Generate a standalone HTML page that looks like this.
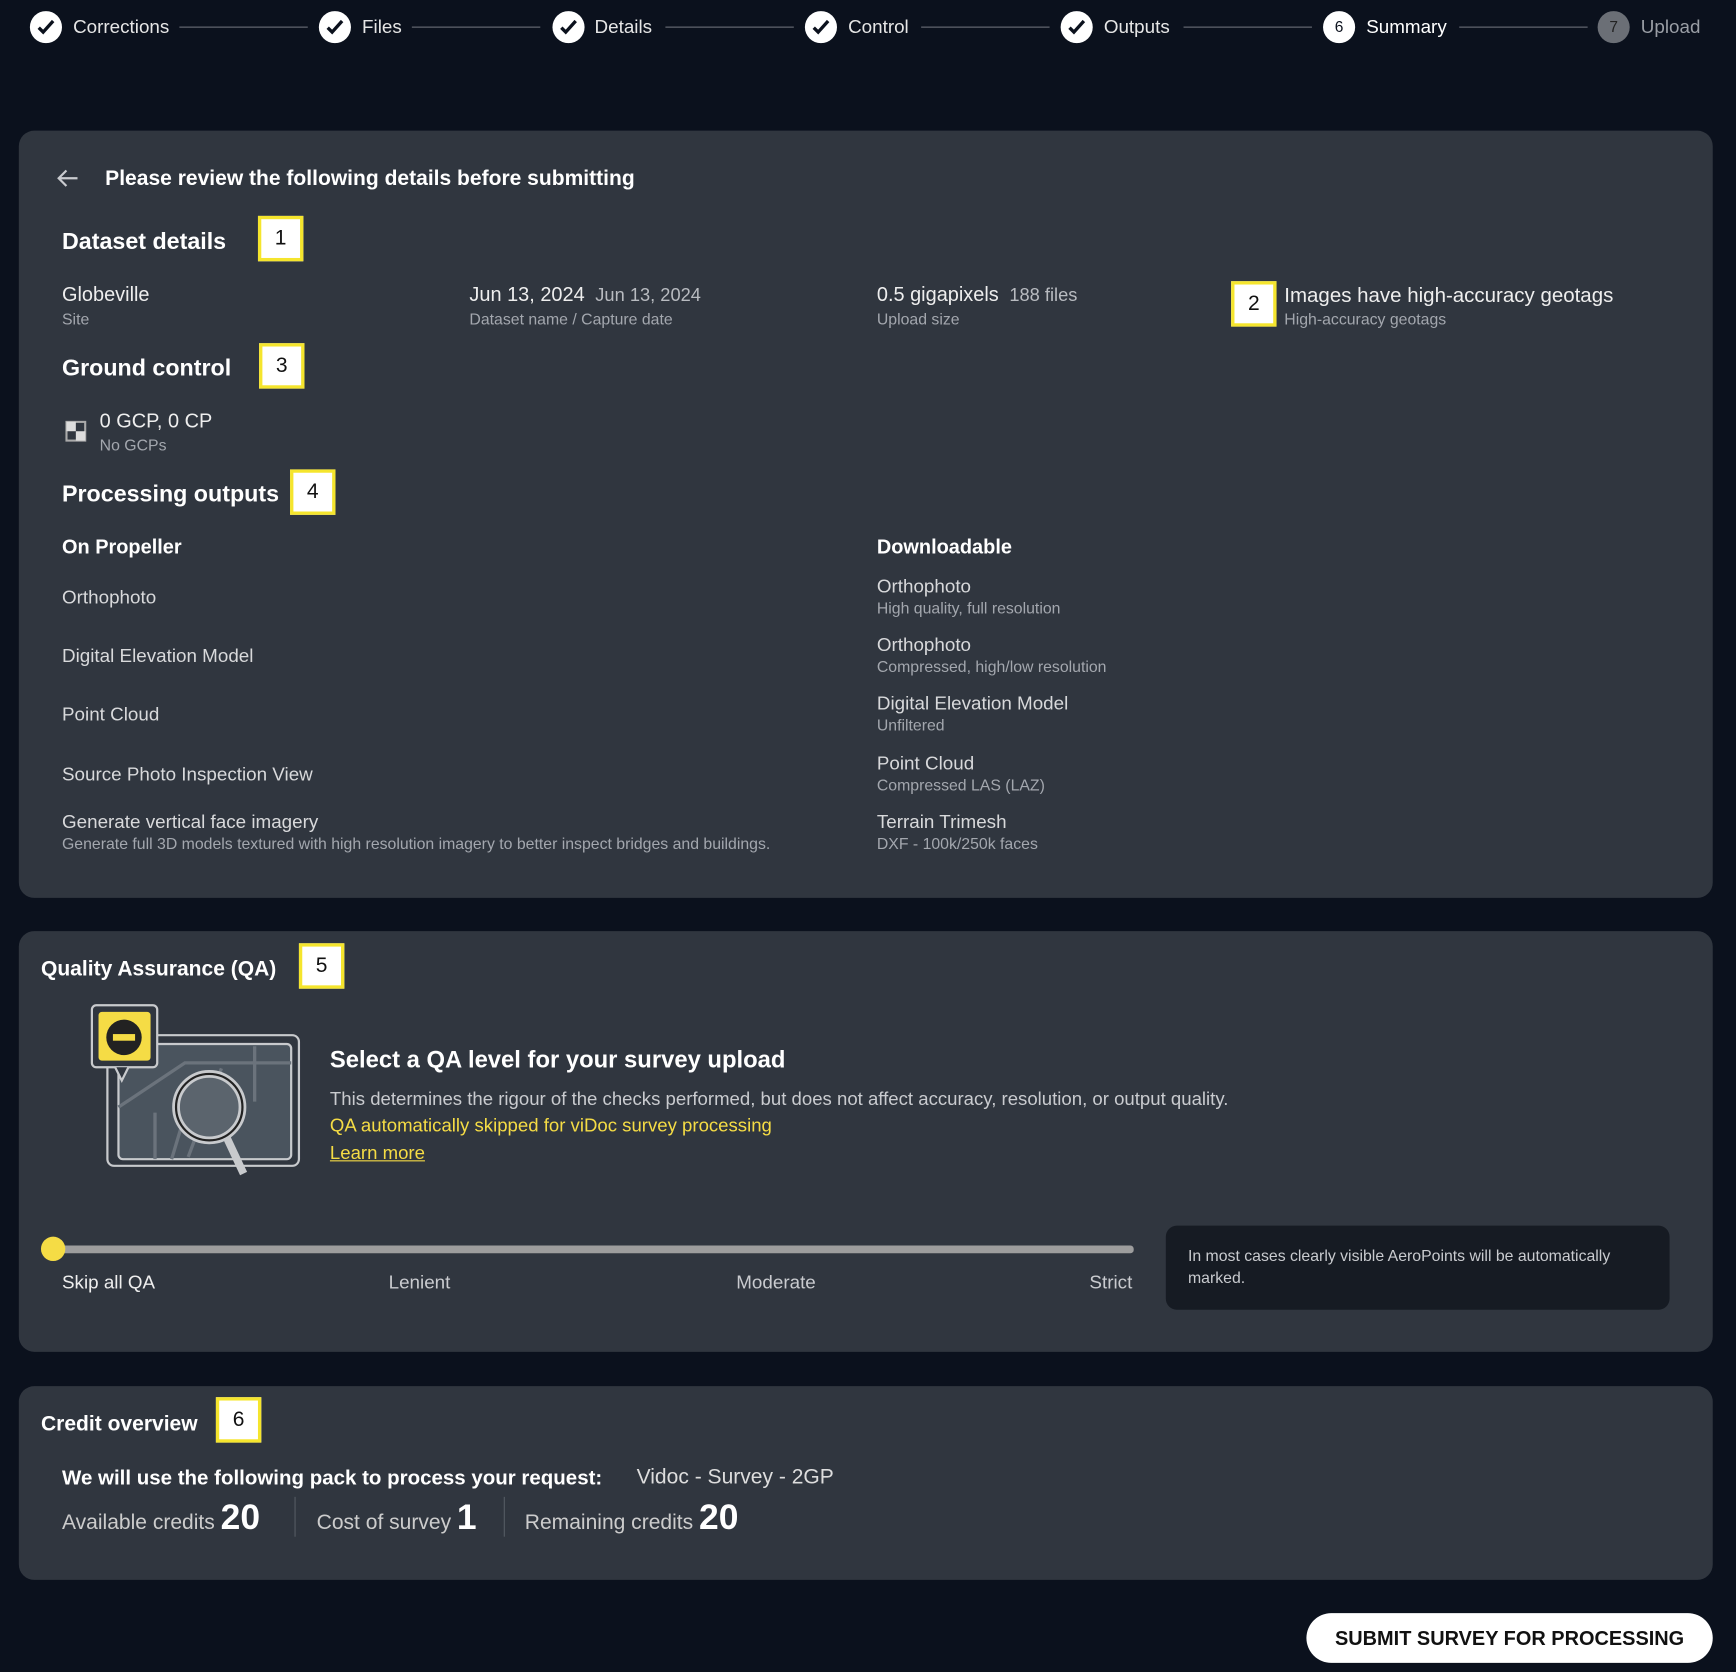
<!DOCTYPE html>
<html><head><meta charset="utf-8"><style>
*{margin:0;padding:0;box-sizing:border-box}
html,body{width:1736px;height:1672px;overflow:hidden;background:#0b111d}
#w{position:absolute;left:0;top:0;width:1568px;height:1510px;transform:scale(1.10714);transform-origin:0 0;font-family:"Liberation Sans",sans-serif;color:#fff}
.a{position:absolute;white-space:nowrap}
.p{position:absolute;left:17px;width:1530px;background:#30363f;border-radius:14px}
.ck{position:absolute;width:29px;height:29px;border-radius:50%;background:#fff;top:10px}
.ck svg{position:absolute;left:6px;top:7px}
.st{top:15px;font-size:17px;color:#e6e6e6}
.ln{position:absolute;top:24px;height:1px;background:#6a6f78}
.b{position:absolute;width:41px;height:41px;background:#fff;border:3px solid #f5e52d;color:#111;font-size:19px;text-align:center;line-height:35px}
.h{font-weight:bold;font-size:21px}
.m{font-size:18px;color:#eee}
.s{font-size:14.3px;color:#a3a7ae}
.o{font-size:17px;color:#d8d9db}
</style></head><body><div id="w">
<div class="ck" style="left:27px"><svg width="17" height="15"><path d="M2 8l4 4 9-10" stroke="#0b111d" stroke-width="3" fill="none"/></svg></div><div class="a st" style="left:66px">Corrections</div>
<div class="ln" style="left:162px;width:116px"></div>
<div class="ck" style="left:288px"><svg width="17" height="15"><path d="M2 8l4 4 9-10" stroke="#0b111d" stroke-width="3" fill="none"/></svg></div><div class="a st" style="left:327px">Files</div>
<div class="ln" style="left:372px;width:116px"></div>
<div class="ck" style="left:499px"><svg width="17" height="15"><path d="M2 8l4 4 9-10" stroke="#0b111d" stroke-width="3" fill="none"/></svg></div><div class="a st" style="left:537px">Details</div>
<div class="ln" style="left:601px;width:116px"></div>
<div class="ck" style="left:727px"><svg width="17" height="15"><path d="M2 8l4 4 9-10" stroke="#0b111d" stroke-width="3" fill="none"/></svg></div><div class="a st" style="left:766px">Control</div>
<div class="ln" style="left:832px;width:116px"></div>
<div class="ck" style="left:958px"><svg width="17" height="15"><path d="M2 8l4 4 9-10" stroke="#0b111d" stroke-width="3" fill="none"/></svg></div><div class="a st" style="left:997px">Outputs</div>
<div class="ln" style="left:1069px;width:116px"></div>
<div class="ck" style="left:1195px;color:#0b111d;font-size:14px;text-align:center;line-height:29px">6</div><div class="a st" style="left:1234px;color:#fff">Summary</div>
<div class="ln" style="left:1318px;width:116px"></div>
<div class="ck" style="left:1443px;background:#6b6f76;color:#222;font-size:14px;text-align:center;line-height:29px">7</div><div class="a st" style="left:1482px;color:#9a9ea5">Upload</div>

<div class="p" style="top:118px;height:693px"></div>
<svg class="a" style="left:50px;top:151px" width="22" height="20"><path d="M20 10H3M10 3L3 10l7 7" stroke="#c9cbcf" stroke-width="2" fill="none"/></svg>
<div class="a" style="left:95px;top:151px;font-size:19px;font-weight:bold">Please review the following details before submitting</div>
<div class="a h" style="left:56px;top:207px">Dataset details</div><div class="b" style="left:233px;top:195px">1</div>
<div class="a m" style="left:56px;top:256px">Globeville</div><div class="a s" style="left:56px;top:281px">Site</div>
<div class="a m" style="left:424px;top:256px">Jun 13, 2024 <span style="font-size:16.5px;color:#b8bbc0">&nbsp;Jun 13, 2024</span></div><div class="a s" style="left:424px;top:281px">Dataset name / Capture date</div>
<div class="a m" style="left:792px;top:256px">0.5 gigapixels <span style="font-size:16.5px;color:#b8bbc0">&nbsp;188 files</span></div><div class="a s" style="left:792px;top:281px">Upload size</div>
<div class="b" style="left:1112px;top:254px">2</div>
<div class="a m" style="left:1160px;top:256px;font-size:18.5px">Images have high-accuracy geotags</div><div class="a s" style="left:1160px;top:281px">High-accuracy geotags</div>
<div class="a h" style="left:56px;top:321px">Ground control</div><div class="b" style="left:234px;top:310px">3</div>
<svg class="a" style="left:59px;top:380px" width="19" height="19"><rect x="1" y="1" width="17" height="17" fill="none" stroke="#aaa" stroke-width="2"/><rect x="1" y="1" width="8.5" height="8.5" fill="#ddd"/><rect x="9.5" y="9.5" width="8.5" height="8.5" fill="#ddd"/></svg>
<div class="a m" style="left:90px;top:370px">0 GCP, 0 CP</div><div class="a s" style="left:90px;top:395px">No GCPs</div>
<div class="a h" style="left:56px;top:435px">Processing outputs</div><div class="b" style="left:262px;top:424px">4</div>
<div class="a" style="left:56px;top:484px;font-size:18px;font-weight:bold">On Propeller</div>
<div class="a" style="left:792px;top:484px;font-size:18px;font-weight:bold">Downloadable</div>
<div class="a o" style="left:56px;top:530px">Orthophoto</div>
<div class="a o" style="left:56px;top:583px">Digital Elevation Model</div>
<div class="a o" style="left:56px;top:636px">Point Cloud</div>
<div class="a o" style="left:56px;top:690px">Source Photo Inspection View</div>
<div class="a o" style="left:56px;top:733px">Generate vertical face imagery</div>
<div class="a s" style="left:56px;top:755px">Generate full 3D models textured with high resolution imagery to better inspect bridges and buildings.</div>
<div class="a o" style="left:792px;top:520px">Orthophoto</div><div class="a s" style="left:792px;top:542px">High quality, full resolution</div>
<div class="a o" style="left:792px;top:573px">Orthophoto</div><div class="a s" style="left:792px;top:595px">Compressed, high/low resolution</div>
<div class="a o" style="left:792px;top:626px">Digital Elevation Model</div><div class="a s" style="left:792px;top:648px">Unfiltered</div>
<div class="a o" style="left:792px;top:680px">Point Cloud</div><div class="a s" style="left:792px;top:702px">Compressed LAS (LAZ)</div>
<div class="a o" style="left:792px;top:733px">Terrain Trimesh</div><div class="a s" style="left:792px;top:755px">DXF - 100k/250k faces</div>

<div class="p" style="top:841px;height:380px"></div>
<div class="a" style="left:37px;top:865px;font-size:19px;font-weight:bold">Quality Assurance (QA)</div><div class="b" style="left:270px;top:852px">5</div>
<svg class="a" style="left:80px;top:905px" width="195" height="160">
<rect x="17" y="30" width="173" height="118" rx="6" fill="#30363f" stroke="#c8cacd" stroke-width="2"/>
<rect x="27" y="38" width="156" height="104" rx="4" fill="#4a545e" stroke="#c8cacd" stroke-width="2"/>
<path d="M27 95l60-40 96 0M75 142l15-50M60 100v42M120 60l-30 80M150 40v50" stroke="#6b737c" stroke-width="3" fill="none"/>
<circle cx="109" cy="95" r="30" fill="#5b646d" stroke="#c8cacd" stroke-width="7"/><circle cx="109" cy="95" r="30" fill="none" stroke="#222" stroke-width="2"/>
<path d="M125 123l15 32" stroke="#c8cacd" stroke-width="7"/>
<rect x="3" y="3" width="59" height="56" rx="4" fill="#30363f" stroke="#c8cacd" stroke-width="2"/>
<rect x="9" y="9" width="47" height="44" rx="3" fill="#f5dc45"/>
<path d="M24 59l6 12 6-12" fill="#30363f" stroke="#c8cacd" stroke-width="2"/>
<circle cx="32" cy="32" r="16" fill="#222"/><rect x="22" y="29" width="20" height="6" fill="#f5dc45"/>
</svg>
<div class="a" style="left:298px;top:945px;font-size:21.5px;font-weight:bold">Select a QA level for your survey upload</div>
<div class="a" style="left:298px;top:983px;font-size:16.8px;color:#c9cbcf">This determines the rigour of the checks performed, but does not affect accuracy, resolution, or output quality.</div>
<div class="a" style="left:298px;top:1007px;font-size:16.8px;color:#f5dc45">QA automatically skipped for viDoc survey processing</div>
<div class="a" style="left:298px;top:1032px;font-size:16.8px;color:#f5dc45;text-decoration:underline">Learn more</div>
<div class="a" style="left:48px;top:1125px;width:976px;height:7px;background:#9d9d9d;border-radius:3px"></div>
<div class="a" style="left:37px;top:1117px;width:22px;height:22px;border-radius:50%;background:#f5dc45"></div>
<div class="a" style="left:56px;top:1149px;font-size:17px;color:#eee">Skip all QA</div>
<div class="a" style="left:351px;top:1149px;font-size:17px;color:#c9cbcf">Lenient</div>
<div class="a" style="left:665px;top:1149px;font-size:17px;color:#c9cbcf">Moderate</div>
<div class="a" style="left:984px;top:1149px;font-size:17px;color:#c9cbcf">Strict</div>
<div class="a" style="left:1053px;top:1107px;width:455px;height:76px;background:#161b23;border-radius:10px;white-space:normal;padding:18px 30px 18px 20px;font-size:14.3px;line-height:20px;color:#c9cbcf">In most cases clearly visible AeroPoints will be automatically marked.</div>

<div class="p" style="top:1252px;height:175px"></div>
<div class="a" style="left:37px;top:1276px;font-size:19px;font-weight:bold">Credit overview</div><div class="b" style="left:195px;top:1262px">6</div>
<div class="a" style="left:56px;top:1324px;font-size:18.5px;font-weight:bold">We will use the following pack to process your request:</div>
<div class="a" style="left:575px;top:1324px;font-size:19px;color:#ddd">Vidoc - Survey - 2GP</div>
<div class="a" style="left:56px;top:1352px;font-size:19px;color:#ccc">Available credits <b style="font-size:32px;color:#fff">20</b></div>
<div class="a" style="left:266px;top:1352px;width:1px;height:36px;background:#555b63"></div>
<div class="a" style="left:286px;top:1352px;font-size:19px;color:#ccc">Cost of survey <b style="font-size:32px;color:#fff">1</b></div>
<div class="a" style="left:455px;top:1352px;width:1px;height:36px;background:#555b63"></div>
<div class="a" style="left:474px;top:1352px;font-size:19px;color:#ccc">Remaining credits <b style="font-size:32px;color:#fff">20</b></div>

<div class="a" style="left:1180px;top:1457px;width:367px;height:45px;background:#fff;border-radius:23px;color:#111;font-size:18px;font-weight:bold;text-align:center;line-height:46px">SUBMIT SURVEY FOR PROCESSING</div>
</div></body></html>
